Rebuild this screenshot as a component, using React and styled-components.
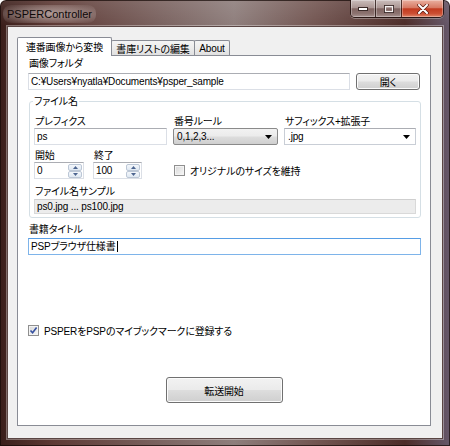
import React from 'react';
import styled, { createGlobalStyle } from 'styled-components';

const GlobalStyle = createGlobalStyle`
  html, body {
    margin: 0;
    padding: 0;
  }
  body {
    width: 450px;
    height: 446px;
    overflow: hidden;
  }
`;

const UI_FONT = `"Liberation Sans", "Noto Sans CJK JP", sans-serif`;

const Window = styled.div`
  width: 450px;
  height: 446px;
  box-sizing: border-box;
  display: flex;
  flex-direction: column;
  border-radius: 6px 6px 0 0;
  background:
    linear-gradient(180deg, rgba(255,255,255,0.10) 0, rgba(255,255,255,0) 26px),
    linear-gradient(90deg, #3a1e1a 0%, #5e3a35 12%, #7a625f 35%, #8e7e7c 52%, #735652 70%, #4c2c28 90%, #66586a 100%);
  box-shadow: inset 0 0 0 1px rgba(20, 8, 6, 0.7);
  font-family: ${UI_FONT};
  font-size: 10px;
  font-feature-settings: "palt";
  letter-spacing: -0.15px;
  color: #000;
`;

const TitleBar = styled.div`
  height: 26px;
  flex-shrink: 0;
  display: flex;
  align-items: flex-start;
`;

const Title = styled.div`
  margin: 5px 0 0 3px;
  padding: 3px 4px;
  font: 11px "Liberation Sans", sans-serif;
  letter-spacing: 0;
  color: #0e0808;
  border-radius: 8px;
  background: radial-gradient(ellipse at center, rgba(225,214,211,0.6) 0%, rgba(225,214,211,0.3) 55%, rgba(225,214,211,0) 100%);
`;

const Captions = styled.div`
  display: flex;
  margin-left: auto;
  margin-right: 6px;
  border: 1px solid rgba(34, 16, 14, 0.85);
  border-top: none;
  border-radius: 0 0 5px 5px;
  overflow: hidden;
  box-shadow: 0 1px 0 rgba(255,255,255,0.3);
`;

const CapButton = styled.div`
  width: ${p => p.$w}px;
  height: 17px;
  display: flex;
  align-items: center;
  justify-content: center;
  border-left: ${p => (p.$first ? 'none' : '1px solid rgba(34,16,14,0.75)')};
  background: ${p => p.$close
    ? 'linear-gradient(180deg, #eab0a0 0%, #d77a64 45%, #c23a1f 52%, #cc4f33 80%, #e2876a 100%)'
    : 'linear-gradient(180deg, #cbbebc 0%, #ab9693 45%, #806562 52%, #8c7370 80%, #a89391 100%)'};
  box-shadow: inset 0 0 0 1px rgba(255,255,255,0.3);
`;

const Client = styled.div`
  flex: 1;
  margin: 0 7px 7px 7px;
  display: flex;
  flex-direction: column;
  padding: 11px 11px 12px 9px;
  background: #f0f0f0;
  border: 1px solid #5a4644;
  box-shadow: 0 0 0 1px rgba(255,255,255,0.35);
`;

const TabStrip = styled.div`
  height: 17px;
  display: flex;
  align-items: flex-end;
  position: relative;
  z-index: 1;
`;

const Tab = styled.div`
  box-sizing: border-box;
  width: ${p => p.$w}px;
  height: ${p => (p.$active ? 19 : 15)}px;
  margin-bottom: ${p => (p.$active ? -1 : 0)}px;
  margin-left: ${p => (p.$first ? 0 : -1)}px;
  display: flex;
  align-items: center;
  justify-content: center;
  white-space: nowrap;
  border: 1px solid #898c95;
  border-bottom: none;
  border-radius: 2px 2px 0 0;
  background: ${p => (p.$active ? '#fff' : 'linear-gradient(180deg, #f4f4f4 0%, #ececec 50%, #e0e0e0 100%)')};
  padding-bottom: ${p => (p.$active ? 2 : 0)}px;
`;

const Panel = styled.div`
  flex: 1;
  display: flex;
  flex-direction: column;
  padding: 1px 10px 0 10px;
  background: #fff;
  border: 1px solid #898c95;
`;

const Label = styled.div`
  height: 13px;
  line-height: 13px;
  white-space: nowrap;
  margin-top: ${p => p.$mt || 0}px;
  padding-left: 1px;
`;

const Row = styled.div`
  display: flex;
  align-items: flex-end;
  gap: ${p => p.$gap || 0}px;
  margin-top: ${p => p.$mt || 0}px;
`;

const TextBox = styled.div`
  box-sizing: border-box;
  flex: ${p => (p.$grow ? 1 : 'none')};
  height: ${p => p.$h || 17}px;
  line-height: ${p => (p.$h || 17) - 2}px;
  margin-top: ${p => p.$mt || 0}px;
  margin-right: ${p => p.$mr || 0}px;
  padding: 0 2px;
  white-space: nowrap;
  overflow: hidden;
  background: ${p => (p.$readOnly ? '#ececec' : '#fff')};
  border: 1px solid ${p => (p.$focused ? '#7eb4ea' : p.$readOnly ? '#d9d9d9' : '#dbdfe6')};
  border-top-color: ${p => (p.$focused ? '#569de5' : p.$readOnly ? '#cfcfcf' : '#abadb3')};
`;

const Caret = styled.span`
  display: inline-block;
  width: 1px;
  height: 11px;
  margin-left: 1px;
  vertical-align: -2px;
  background: #000;
`;

const PushButton = styled.div`
  box-sizing: border-box;
  width: ${p => p.$w}px;
  height: ${p => p.$h}px;
  display: flex;
  align-items: center;
  justify-content: center;
  align-self: ${p => (p.$center ? 'center' : 'auto')};
  margin-top: ${p => p.$mt || 0}px;
  border: 1px solid #707070;
  border-radius: 3px;
  background: linear-gradient(180deg, #f2f2f2 0%, #ebebeb 48%, #dddddd 52%, #cfcfcf 100%);
  box-shadow: inset 0 0 0 1px #fbfbfb;
`;

const GroupBox = styled.fieldset`
  margin: 5px -1px 0 1px;
  padding: 0 4px 3px 4px;
  min-width: 0;
  border: 1px solid #d5dfe5;
  border-radius: 3px;
`;

const Legend = styled.legend`
  padding: 0 1px;
  margin-left: -1px;
  line-height: 13px;
  font-size: 10px;
`;

const FieldGrid = styled.div`
  display: grid;
  grid-template-columns: 133px 105px 132px;
  justify-content: space-between;
  margin-top: 7px;
`;

const Field = styled.div`
  display: flex;
  flex-direction: column;
  width: ${p => (p.$w ? `${p.$w}px` : 'auto')};
`;

const Combo = styled.div`
  box-sizing: border-box;
  height: 17px;
  display: flex;
  align-items: center;
  justify-content: space-between;
  padding: 0 5px 0 3px;
  border: 1px solid ${p => (p.$editable ? '#c9ced6' : '#8a8a8a')};
  border-top-color: ${p => (p.$editable ? '#abadb3' : '#8a8a8a')};
  border-radius: ${p => (p.$editable ? 0 : 2)}px;
  background: ${p => (p.$editable
    ? '#fff'
    : 'linear-gradient(180deg, #f2f2f2 0%, #ebebeb 48%, #dddddd 52%, #cfcfcf 100%)')};
`;

const SpinBox = styled.div`
  box-sizing: border-box;
  height: 17px;
  display: flex;
  border: 1px solid #dbdfe6;
  border-top-color: #abadb3;
  background: #fff;
`;

const SpinValue = styled.div`
  flex: 1;
  padding-left: 2px;
  line-height: 15px;
`;

const SpinButtons = styled.div`
  width: 14px;
  margin: 1px 1px 0 0;
  display: flex;
  flex-direction: column;
`;

const SpinBtn = styled.div`
  flex: 1;
  display: flex;
  align-items: center;
  justify-content: center;
  border: 1px solid #bcc7d6;
  border-radius: 2px;
  background: linear-gradient(180deg, #f4f7fb 0%, #dfe8f2 100%);
`;

const CheckRow = styled.div`
  height: ${p => p.$h || 13}px;
  display: flex;
  align-items: center;
  gap: 5px;
  margin-left: ${p => p.$ml || 0}px;
  margin-top: ${p => p.$mt || 0}px;
  white-space: nowrap;
`;

const CheckBox = styled.span`
  box-sizing: border-box;
  width: 11px;
  height: 11px;
  display: flex;
  align-items: center;
  justify-content: center;
  border: 1px solid #8f8f8f;
  background: linear-gradient(135deg, #d8d8d8 0%, #f7f7f7 100%);
  box-shadow: inset 0 0 0 1px #f4f4f4;
`;

const DropArrow = () => (
  <svg width="7" height="4" viewBox="0 0 7 4">
    <path d="M0 0h7L3.5 4z" fill="#000" />
  </svg>
);

const SpinArrow = ({ up }) => (
  <svg width="5" height="3" viewBox="0 0 5 3">
    <path d={up ? 'M0 3h5L2.5 0z' : 'M0 0h5L2.5 3z'} fill="#4d6590" />
  </svg>
);

const Check = ({ checked }) => (
  <CheckBox>
    {checked && (
      <svg width="9" height="9" viewBox="0 0 9 9">
        <path d="M1.5 4.5 L3.6 6.8 L7.6 1.5" fill="none" stroke="#3550a0" strokeWidth="1.6" />
      </svg>
    )}
  </CheckBox>
);

const Spin = ({ value }) => (
  <SpinBox>
    <SpinValue>{value}</SpinValue>
    <SpinButtons>
      <SpinBtn><SpinArrow up /></SpinBtn>
      <SpinBtn><SpinArrow /></SpinBtn>
    </SpinButtons>
  </SpinBox>
);

export default function App() {
  return (
    <>
      <GlobalStyle />
      <Window>
        <TitleBar>
          <Title>PSPERController</Title>
          <Captions>
            <CapButton $w={24} $first>
              <svg width="10" height="4" viewBox="0 0 10 4">
                <rect x="0.5" y="0.5" width="9" height="3" fill="#fff" stroke="#3a2a28" strokeWidth="1" />
              </svg>
            </CapButton>
            <CapButton $w={25}>
              <svg width="10" height="8" viewBox="0 0 10 8">
                <rect x="0.5" y="0.5" width="9" height="7" fill="none" stroke="#3a2a28" strokeWidth="1" />
                <rect x="1.5" y="1.5" width="7" height="5" fill="none" stroke="#f4f0f0" strokeWidth="1.2" />
              </svg>
            </CapButton>
            <CapButton $w={41} $close>
              <svg width="12" height="10" viewBox="0 0 12 10">
                <path d="M2 1 L10 9 M10 1 L2 9" stroke="#5a1a10" strokeWidth="3.4" strokeLinecap="round" />
                <path d="M2 1 L10 9 M10 1 L2 9" stroke="#fff" strokeWidth="2" strokeLinecap="round" />
              </svg>
            </CapButton>
          </Captions>
        </TitleBar>

        <Client>
          <TabStrip>
            <Tab $w={95} $active $first>連番画像から変換</Tab>
            <Tab $w={84}>書庫リストの編集</Tab>
            <Tab $w={36}>About</Tab>
          </TabStrip>

          <Panel>
            <Label>画像フォルダ</Label>
            <Row $gap={6} $mt={3}>
              <TextBox $grow>C:¥Users¥nyatla¥Documents¥psper_sample</TextBox>
              <PushButton $w={64} $h={17}>開く</PushButton>
            </Row>

            <GroupBox>
              <Legend>ファイル名</Legend>
              <FieldGrid>
                <Field>
                  <Label>プレフィクス</Label>
                  <TextBox>ps</TextBox>
                </Field>
                <Field>
                  <Label>番号ルール</Label>
                  <Combo>
                    <span>0,1,2,3...</span>
                    <DropArrow />
                  </Combo>
                </Field>
                <Field>
                  <Label>サフィックス+拡張子</Label>
                  <Combo $editable>
                    <span>.jpg</span>
                    <DropArrow />
                  </Combo>
                </Field>
              </FieldGrid>

              <Row $gap={9} $mt={4}>
                <Field $w={50}>
                  <Label>開始</Label>
                  <Spin value="0" />
                </Field>
                <Field $w={49}>
                  <Label>終了</Label>
                  <Spin value="100" />
                </Field>
                <CheckRow $h={17} $ml={23}>
                  <Check />
                  <span>オリジナルのサイズを維持</span>
                </CheckRow>
              </Row>

              <Label $mt={6}>ファイル名サンプル</Label>
              <TextBox $readOnly $h={15} $mt={1}>ps0.jpg ... ps100.jpg</TextBox>
            </GroupBox>

            <Label $mt={5}>書籍タイトル</Label>
            <TextBox $focused $mt={2} $mr={-1}>
              PSPブラウザ仕様書<Caret />
            </TextBox>

            <CheckRow $mt={69}>
              <Check checked />
              <span>PSPERをPSPのマイブックマークに登録する</span>
            </CheckRow>

            <PushButton $w={117} $h={26} $mt={40} $center>転送開始</PushButton>
          </Panel>
        </Client>
      </Window>
    </>
  );
}
